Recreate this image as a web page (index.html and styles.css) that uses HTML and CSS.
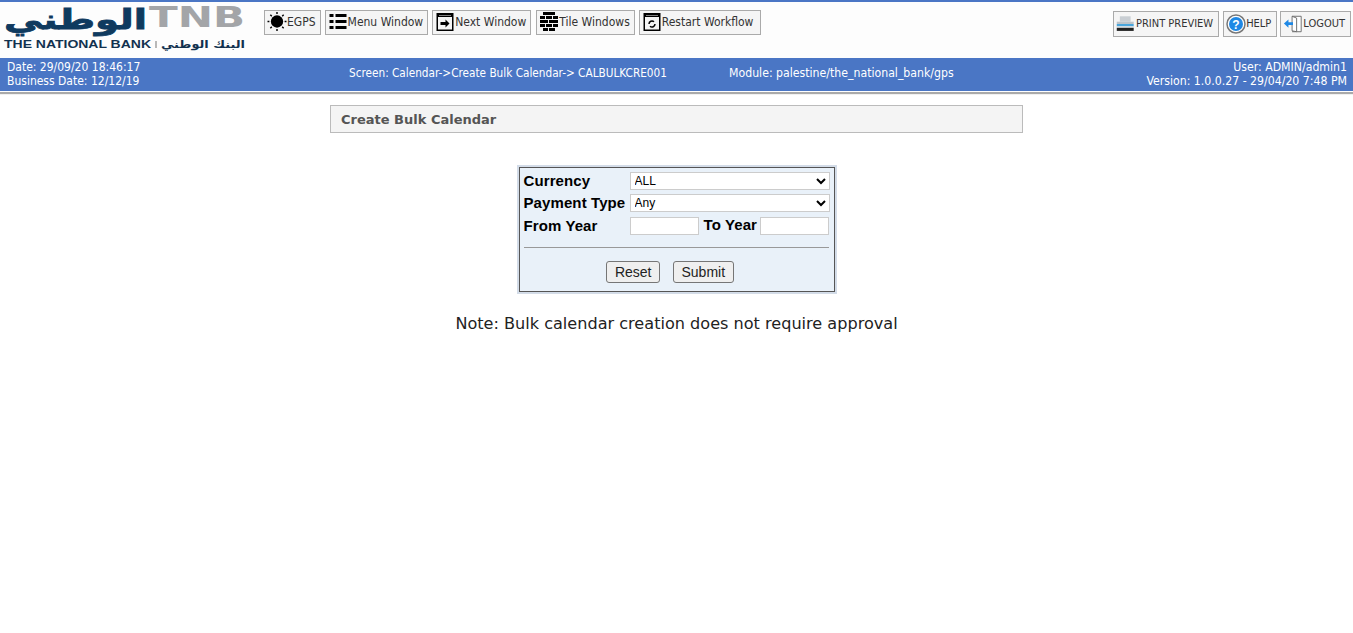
FILE: index.html
```html
<!DOCTYPE html>
<html lang="en">

<head>
    <meta charset="UTF-8">
    <title>Create Bulk Calendar</title>
    <link rel="stylesheet" href="styles.css">
</head>

<body>
    <div id="header">
        <svg class="logo" width="246" height="52" viewBox="0 0 246 52">
            <text x="147" y="29" text-anchor="end" class="logo-ar" textLength="143" lengthAdjust="spacingAndGlyphs">الوطني</text>
            <text x="149" y="27" class="logo-tnb" textLength="96" lengthAdjust="spacingAndGlyphs">TNB</text>
            <text x="4" y="47.500" class="logo-en" textLength="147" lengthAdjust="spacingAndGlyphs">THE NATIONAL BANK</text>
            <rect x="155.500" y="41" width="1" height="7" fill="#777"></rect>
            <text x="245" y="48" text-anchor="end" class="logo-sub" textLength="84" lengthAdjust="spacingAndGlyphs">البنك الوطني</text>
        </svg>

        <div class="toolbar">
            <button class="tool">
                <svg width="20" height="19" viewBox="0 0 20 20">
                    <circle cx="10" cy="10" r="6.500"></circle>
                    <path d="M10 0v2M10 18v2M0 10h2M18 10h2M3 3l1.500 1.500M15.500 15.500L17 17M17 3l-1.500 1.500M4.500 15.500L3 17" stroke="#000" stroke-width="1.500"></path>
                </svg>
                EGPS
            </button>
            <button class="tool">
                <svg width="17" height="18" viewBox="0 0 17 18">
                    <path d="M0 1h4v3H0zM6 1h11v3H6zM0 7h4v3H0zM6 7h11v3H6zM0 13h4v3H0zM6 13h11v3H6z"></path>
                </svg>
                Menu Window
            </button>
            <button class="tool">
                <svg width="17" height="18" viewBox="0 0 17 18">
                    <rect x="0.750" y="0.750" width="15.500" height="16.500" fill="none" stroke="#000" stroke-width="1.500"></rect>
                    <path d="M1 1h15v3H1z"></path>
                    <path d="M3 2.500h11" stroke="#fff" stroke-dasharray="1 1"></path>
                    <path d="M4 9h5V6.500L13 10.500 9 14.500V12H4z"></path>
                </svg>
                Next Window
            </button>
            <button class="tool tool-tile">
                <svg width="18" height="19" viewBox="0 0 18 19">
                    <path d="M3 0h12v3H3zM0 4h5v3H0zM6 4h6v3H6zM13 4h5v3h-5zM0 8h8v3H0zM9 8h9v3H9zM0 12h5v3H0zM6 12h6v3H6zM13 12h5v3h-5zM3 16h5v3H3zM9 16h6v3H9z"></path>
                </svg>
                Tile Windows
            </button>
            <button class="tool tool-wide">
                <svg width="17" height="18" viewBox="0 0 17 18">
                    <rect x="0.750" y="0.750" width="15.500" height="16.500" fill="none" stroke="#000" stroke-width="1.500"></rect>
                    <path d="M1 1h15v3H1z"></path>
                    <path d="M3 2.500h11" stroke="#fff" stroke-dasharray="1 1"></path>
                    <path d="M5.500 11a3 3 0 0 1 5-2.200M11.500 11a3 3 0 0 1-5 2.200" fill="none" stroke="#000" stroke-width="1.500"></path>
                </svg>
                Restart Workflow
            </button>
        </div>

        <div class="toolbar toolbar-right">
            <button class="tool tool-caps tool-print">
                <svg width="26" height="22" viewBox="0 0 26 22" preserveAspectRatio="xMinYMid">
                    <path d="M5 1h14v7H5z" fill="#c9ced3"></path>
                    <path d="M1 8h22v3H1z" fill="#bcc3c9"></path>
                    <path d="M1 11h22v3H1z" fill="#4aa6dc"></path>
                    <path d="M1 14h22v2H1z" fill="#d5dade"></path>
                    <path d="M1 16h22v4H1z" fill="#222"></path>
                </svg>
                PRINT PREVIEW
            </button>
            <button class="tool tool-caps">
                <svg width="20" height="20" viewBox="0 0 20 20">
                    <circle cx="10" cy="10" r="9" fill="#fff" stroke="#777" stroke-width="1.500"></circle>
                    <circle cx="10" cy="10" r="7" fill="#1e88e5"></circle>
                    <text x="10" y="14.500" class="help-mark">?</text>
                </svg>
                HELP
            </button>
            <button class="tool tool-caps">
                <svg width="22" height="20" viewBox="0 0 22 20">
                    <path d="M10 1.500h10v17H10" fill="#fff" stroke="#666"></path>
                    <path d="M10 1.500l5 2v15l-5-1z" fill="#fff" stroke="#666"></path>
                    <path d="M1 9.500L6 5v3h5v3H6v3z" fill="#1e88e5"></path>
                </svg>
                LOGOUT
            </button>
        </div>
    </div>

    <div id="infobar">
        <div class="info-left">
            <div>Date: 29/09/20 18:46:17</div>
            <div>Business Date: 12/12/19</div>
        </div>
        <div class="info-screen">Screen: Calendar-&gt;Create Bulk Calendar-&gt; CALBULKCRE001</div>
        <div class="info-module">Module: palestine/the_national_bank/gps</div>
        <div class="info-right">
            <div>User: ADMIN/admin1</div>
            <div>Version: 1.0.0.27 - 29/04/20 7:48 PM</div>
        </div>
    </div>

    <div id="content">
        <div class="page-title">Create Bulk Calendar</div>

        <form class="bulk-form">
            <div class="form-row">
                <label class="form-label">Currency</label>
                <select class="form-select">
                    <option>ALL</option>
                </select>
            </div>
            <div class="form-row">
                <label class="form-label">Payment Type</label>
                <select class="form-select">
                    <option>Any</option>
                </select>
            </div>
            <div class="form-row form-row-years">
                <label class="form-label">From Year</label>
                <input type="text" class="form-input">
                <label class="form-label-to">To Year</label>
                <input type="text" class="form-input">
            </div>
            <hr class="form-line">
            <div class="form-buttons">
                <button type="button" class="form-btn">Reset</button>
                <button type="button" class="form-btn">Submit</button>
            </div>
        </form>

        <p class="note">Note: Bulk calendar creation does not require approval</p>
    </div>
</body>

</html>
```

FILE: styles.css
```css
body {
    font-family: "DejaVu Sans", Verdana, sans-serif;
    margin: 0;
    padding: 0;
    background-color: white;
}

#header {
    display: flex;
    align-items: flex-start;
    height: 56px;
    border-top: 2px solid #4a76c5;
    background-color: #fdfdfd;
}

.logo {
    flex: none;
    margin-top: -2px;
}

.logo-ar {
    font: bold 28px "DejaVu Sans", sans-serif;
    fill: #0f3a5f;
    stroke: #0f3a5f;
    stroke-width: 0.800px;
}

.logo-tnb {
    font: bold 29px "DejaVu Sans", sans-serif;
    fill: #a3a5a8;
}

.logo-en {
    font: bold 10px "Liberation Sans", sans-serif;
    fill: #12314f;
}

.logo-sub {
    font: bold 11px "DejaVu Sans", sans-serif;
    fill: #12314f;
}

.toolbar {
    display: flex;
    gap: 4px;
    margin: 8px 0 0 18px;
}

.toolbar-right {
    gap: 3px;
    margin: 9px 2px 0 auto;
}

.tool {
    display: flex;
    align-items: center;
    height: 25px;
    padding: 0 4px 2px 2px;
    font-family: "DejaVu Sans Condensed", "DejaVu Sans", sans-serif;
    font-size: 12px;
    color: #333;
    background-color: #f5f5f5;
    border: 1px solid #aaa;
    white-space: nowrap;
}

.tool svg {
    flex: none;
    width: 20px;
}

.tool-tile {
    margin-left: 1px;
}

.tool-wide {
    padding-right: 7px;
}

.tool-caps {
    height: 26px;
    padding: 0 5px 1px 2px;
    font-size: 11px;
}

.tool-print {
    margin-right: 1px;
}

.help-mark {
    font: bold 12px "Liberation Sans", sans-serif;
    fill: white;
    text-anchor: middle;
}

#infobar {
    display: flex;
    height: 33px;
    padding: 2px 6px 0 7px;
    box-sizing: border-box;
    background-color: #4a76c5;
    color: white;
    font-family: "DejaVu Sans Condensed", "DejaVu Sans", sans-serif;
    font-size: 12px;
    line-height: 14px;
    box-shadow: 0 1px 0 white, 0 3px 1px #aaa;
}

.info-left {
    width: 342px;
}

.info-screen {
    width: 380px;
    padding-top: 6px;
    font-size: 11.700px;
}

.info-module {
    padding-top: 6px;
    font-size: 12.200px;
}

.info-right {
    margin-left: auto;
    text-align: right;
    font-size: 12.200px;
}

#content {
    width: 693px;
    margin: 14px auto 0;
    text-align: center;
}

.page-title {
    box-sizing: border-box;
    height: 28px;
    padding-left: 10px;
    line-height: 27px;
    text-align: left;
    font-size: 13px;
    font-weight: bold;
    color: #555;
    background-color: #f4f4f4;
    border: 1px solid #bbb;
}

.bulk-form {
    box-sizing: border-box;
    width: 316px;
    height: 125px;
    margin: 34px auto 0;
    padding: 2px 4px 0 4px;
    text-align: left;
    background-color: #e9f1f9;
    border: 1px solid #555;
    outline: 2px solid #d3dce8;
}

.form-row {
    display: flex;
    align-items: center;
    height: 22px;
    font-family: "Liberation Sans", Arial, sans-serif;
    font-weight: bold;
    font-size: 15px;
    letter-spacing: 0.100px;
    color: black;
}

.form-row-years {
    height: 24px;
}

.form-label {
    width: 106px;
    flex: none;
    margin-top: -2px;
}

.form-label-to {
    width: 61px;
    flex: none;
    padding-left: 5px;
    box-sizing: border-box;
    margin-top: -4px;
}

.form-select {
    box-sizing: border-box;
    width: 200px;
    height: 18px;
    padding: 0;
    font-family: "Liberation Sans", Arial, sans-serif;
    font-size: 12px;
    background-color: white;
    border: 1px solid #ccc;
    border-radius: 0;
}

.form-input {
    box-sizing: border-box;
    width: 69px;
    height: 18px;
    padding: 0;
    background-color: white;
    border: 1px solid #ccc;
}

.form-line {
    margin: 9px 0 0 0;
    width: 305px;
    border: 0;
    border-top: 1px solid #999;
}

.form-buttons {
    display: flex;
    gap: 13px;
    justify-content: center;
    margin-top: 13px;
    padding-right: 13px;
}

.form-btn {
    box-sizing: border-box;
    height: 22px;
    padding: 0 7.500px;
    font-family: "Liberation Sans", Arial, sans-serif;
    font-size: 14px;
    color: #222;
    background-color: #efefef;
    border: 1px solid #767676;
    border-radius: 3px;
}

.note {
    margin: 22px 0 0 0;
    font-size: 16.100px;
    color: #222;
}
```
